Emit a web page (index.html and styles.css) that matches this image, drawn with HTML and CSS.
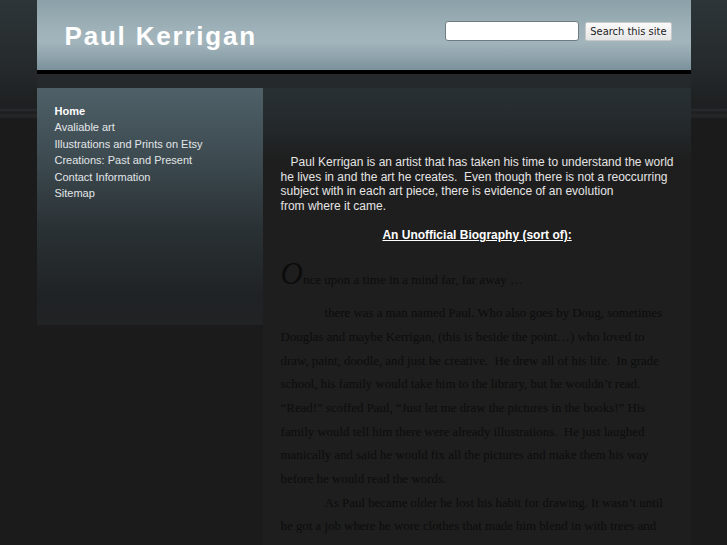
FILE: index.html
```html
<!DOCTYPE html>
<html lang="en">
  <head>
    <meta charset="UTF-8" />
    <title>Paul Kerrigan</title>
    <link rel="stylesheet" href="styles.css">
  </head>
  <body>
    <div class="page">
      <div class="header">
        <div class="site-title">Paul Kerrigan</div>
        <form class="search">
          <input type="text" class="search-input" />
          <button type="button" class="search-btn">Search this site</button>
        </form>
      </div>
      <div class="gap"></div>
      <div class="layout">
        <div class="sidebar">
          <a class="nav-item current" href="#">Home</a>
          <a class="nav-item" href="#">Avaliable art</a>
          <a class="nav-item" href="#">Illustrations and Prints on Etsy</a>
          <a class="nav-item" href="#">Creations: Past and Present</a>
          <a class="nav-item" href="#">Contact Information</a>
          <a class="nav-item" href="#">Sitemap</a>
        </div>
        <div class="main">
          <p class="intro">&nbsp;&nbsp; Paul Kerrigan is an artist that has taken his time to understand the world<br>he lives in and the art he creates.&nbsp; Even though there is not a reoccurring<br>subject with in each art piece, there is evidence of an evolution<br>from where it came.</p>
          <p class="bio-title">An Unofficial Biography (sort of):</p>
          <p class="bio-first"><span class="dropcap">O</span>nce upon a time in a mind far, far away …</p>
          <p class="bio">there was a man named Paul. Who also goes by Doug, sometimes Douglas and maybe Kerrigan, (this is beside the point…) who loved to draw, paint, doodle, and just be creative.&nbsp; He drew all of his life.&nbsp; In grade school, his family would take him to the library, but he wouldn’t read. “Read!” scoffed Paul, “Just let me draw the pictures in the books!” His family would tell him there were already illustrations.&nbsp; He just laughed manically and said he would fix all the pictures and make them his way before he would read the words.</p>
          <p class="bio">As Paul became older he lost his habit for drawing. It wasn’t until he got a job where he wore clothes that made him blend in with trees and rocks, he found his way back to the pencil and paper again, doodling on anything he could find.</p>
        </div>
      </div>
    </div>
  </body>
</html>
```
FILE: styles.css
```css
body {
  margin: 0;
  font-family: "Liberation Sans", Arial, sans-serif;
  background: linear-gradient(#2d3538 0, #262b2d 60px, #1d1f20 108px, #2a2e30 110px, #1d1d1d 112px, #262829 116px, #1b1b1b 119px) no-repeat, #1b1b1b;
  background-size: 100% 120px;
  overflow: hidden;
}
.page {
  width: 654px;
  margin: 0 auto;
}
.header {
  height: 70px;
  border-bottom: 4px solid #000;
  background: linear-gradient(#8ba0a8 0, #9fb2b9 30px, #a3b5bc 42px, #8da2aa 58px, #7a919b 70px);
  display: flex;
  align-items: flex-start;
  justify-content: space-between;
}
.site-title {
  margin: 21px 0 0 28px;
  font-size: 26px;
  font-weight: bold;
  letter-spacing: 1.8px;
  color: #fff;
}
.search {
  display: flex;
  align-items: center;
  gap: 6px;
  margin: 21px 19px 0 0;
}
.search-input {
  width: 130px;
  height: 18px;
  padding: 0 1px;
  border: 1px solid #6f7c82;
  border-radius: 3px;
  background: #fff;
}
.search-btn {
  height: 19px;
  padding: 0 4px;
  border: 1px solid #c8c8c8;
  border-radius: 2px;
  background: linear-gradient(#fafafa, #e6e6e6);
  font-family: "DejaVu Sans Condensed", "Liberation Sans", sans-serif;
  font-size: 11px;
  color: #222;
}
.gap {
  height: 14px;
  background: #25292b;
}
.layout {
  display: flex;
  align-items: flex-start;
}
.sidebar {
  width: 227px;
  height: 237px;
  padding: 15px 0 0 18px;
  box-sizing: border-box;
  display: flex;
  flex-direction: column;
  background: linear-gradient(#4f6068 0, #3d4b51 70px, #2a3134 140px, #1f2224 210px, #212324 237px);
}
.nav-item {
  color: #e2e6e8;
  text-decoration: none;
  font-size: 11px;
  line-height: 16.4px;
}
.nav-item.current {
  font-weight: bold;
  color: #fff;
}
.main {
  flex: 1;
  padding: 67px 17px 0 18px;
  background: linear-gradient(#293034 0, #23282b 40px, #1e1e1e 72px) no-repeat, #1e1e1e;
  min-height: 460px;
}
.intro {
  margin: 0;
  white-space: nowrap;
  font-size: 12px;
  line-height: 14.6px;
  color: #e4e4e4;
}
.bio-title {
  margin: 15px 0 0;
  text-align: center;
  font-size: 12px;
  font-weight: bold;
  text-decoration: underline;
  color: #fff;
}
.bio-first {
  margin: 14px 0 0;
  font-family: "Liberation Serif", "Times New Roman", serif;
  font-size: 13px;
  color: #0c0c0c;
}
.dropcap {
  font-size: 31px;
  font-style: italic;
}
.bio {
  margin: 0;
  text-indent: 44px;
  font-family: "Liberation Serif", "Times New Roman", serif;
  font-size: 12.85px;
  line-height: 23.65px;
  color: #0c0c0c;
}
.bio-first + .bio {
  margin-top: 10px;
}
```
